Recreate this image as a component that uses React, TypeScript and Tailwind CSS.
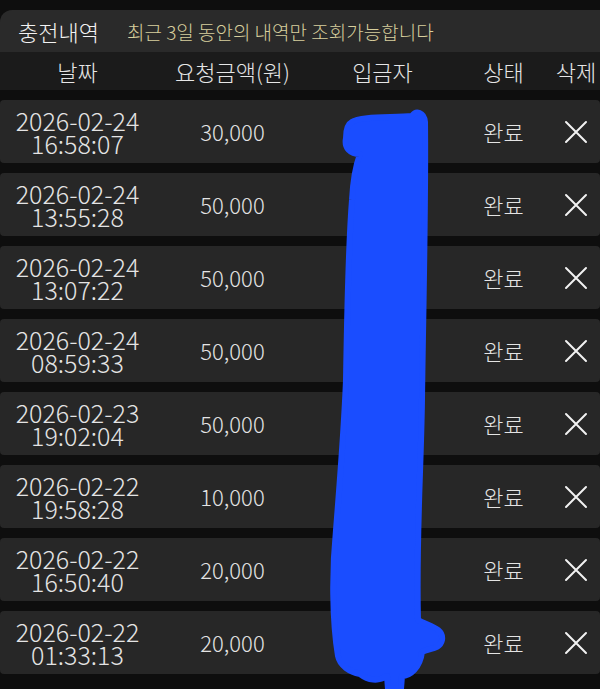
import React from "react";

const rows = [
  { date: "2026-02-24", time: "16:58:07", amount: "30,000" },
  { date: "2026-02-24", time: "13:55:28", amount: "50,000" },
  { date: "2026-02-24", time: "13:07:22", amount: "50,000" },
  { date: "2026-02-24", time: "08:59:33", amount: "50,000" },
  { date: "2026-02-23", time: "19:02:04", amount: "50,000" },
  { date: "2026-02-22", time: "19:58:28", amount: "10,000" },
  { date: "2026-02-22", time: "16:50:40", amount: "20,000" },
  { date: "2026-02-22", time: "01:33:13", amount: "20,000" },
];

const cols = "grid grid-cols-[155px_155px_145px_97px_48px] items-center text-center";

function CloseIcon() {
  return (
    <svg width="24" height="24" viewBox="0 0 24 24" className="mx-auto">
      <path d="M2 2 L22 22 M22 2 L2 22" stroke="#f2f2f2" strokeWidth="2" strokeLinecap="round" fill="none" />
    </svg>
  );
}

function Scribble() {
  // blue marker over the depositor column
  return (
    <svg className="pointer-events-none absolute left-0 top-0" width="600" height="689" viewBox="0 0 600 689">
      <path
        d="M352 122 C360 116 395 118 412 116 C416 110 424 112 425 122 C426 200 423 320 422 400 C421 470 416 540 418 620 C428 626 444 628 442 640 C440 650 428 648 422 652 C420 668 410 676 402 676 L401 689 L388 689 L387 676 C378 682 368 680 360 674 C350 672 340 666 338 656 C332 620 332 570 336 530 C340 480 344 430 346 380 C347 320 348 250 352 200 C353 180 356 165 360 154 C350 154 344 148 346 138 C346 128 348 124 352 122 Z"
        fill="#1a4dff"
        stroke="#1a4dff"
        strokeWidth="6"
        strokeLinejoin="round"
      />
    </svg>
  );
}

export default function App() {
  return (
    <div className="relative h-[689px] w-[600px] overflow-hidden bg-[#0e0e0e] pt-[10px] font-['Noto_Sans_CJK_KR',sans-serif] font-light">
      <div className="flex h-[42px] items-center gap-[28px] rounded-tl-[12px] bg-[#2a2a2a] pl-[18px]">
        <h1 className="text-[22px] leading-none text-[#f2f2f2]">충전내역</h1>
        <p className="text-[19px] leading-none text-[#d8cf9d]">최근 3일 동안의 내역만 조회가능합니다</p>
      </div>
      <div className={`${cols} h-[38px] bg-[#1b1b1b] text-[22px] leading-none text-[#e6e6e6]`}>
        <span>날짜</span>
        <span>요청금액(원)</span>
        <span>입금자</span>
        <span>상태</span>
        <span>삭제</span>
      </div>
      <div className="flex flex-col gap-[10px] pt-[10px]">
        {rows.map((r, i) => (
          <div key={i} className={`${cols} h-[63px] rounded-[4px] bg-[#272727] text-[#e4e4e4]`}>
            <div className="text-[25px] leading-[23px]">
              <div>{r.date}</div>
              <div>{r.time}</div>
            </div>
            <span className="text-[22px]">{r.amount}</span>
            <span />
            <span className="text-[22px]">완료</span>
            <CloseIcon />
          </div>
        ))}
      </div>
      <Scribble />
    </div>
  );
}
